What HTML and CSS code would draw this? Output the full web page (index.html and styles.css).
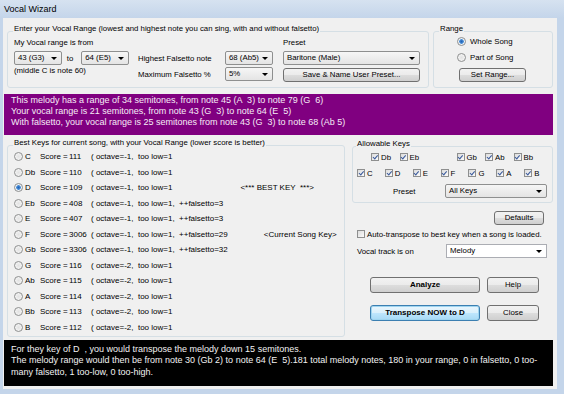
FILE: index.html
```html
<!DOCTYPE html>
<html>
<head>
    <link rel="stylesheet" href="styles.css">
</head>
<body>
    <div class="window">
        <div class="titlebar">Vocal Wizard</div>
        <div class="client">
            <div class="top-row">
                <div class="group vocal">
                    <span class="group-label">Enter your Vocal Range (lowest and highest note you can sing, with and without falsetto)</span>
                    <div class="vocal-body">
                        <div class="col-range">
                            <div class="line">My Vocal range is from</div>
                            <div class="combo-row">
                                <div class="combo w-note">43 (G3)</div>
                                <span class="to">to</span>
                                <div class="combo w-note">64 (E5)</div>
                            </div>
                            <div class="line">(middle C is note 60)</div>
                        </div>
                        <div class="col-falsetto">
                            <div class="field">
                                <span class="field-label">Highest Falsetto note</span>
                                <div class="combo w-small">68 (Ab5)</div>
                            </div>
                            <div class="field">
                                <span class="field-label">Maximum Falsetto %</span>
                                <div class="combo w-small">5%</div>
                            </div>
                        </div>
                        <div class="col-preset">
                            <div class="line">Preset</div>
                            <div class="combo w-preset">Baritone (Male)</div>
                            <button class="btn btn-preset">Save &amp; Name User Preset...</button>
                        </div>
                    </div>
                </div>
                <div class="group range">
                    <span class="group-label">Range</span>
                    <div class="range-body">
                        <div class="radio-row"><span class="radio checked"></span>Whole Song</div>
                        <div class="radio-row"><span class="radio"></span>Part of Song</div>
                        <button class="btn btn-range">Set Range...</button>
                    </div>
                </div>
            </div>

            <div class="info">
                <div class="text-line">This melody has a range of 34 semitones, from note 45 (A  3) to note 79 (G  6)</div>
                <div class="text-line">Your vocal range is 21 semitones, from note 43 (G  3) to note 64 (E  5)</div>
                <div class="text-line">With falsetto, your vocal range is 25 semitones from note 43 (G  3) to note 68 (Ab 5)</div>
            </div>

            <div class="middle-row">
                <div class="group best">
                    <span class="group-label">Best Keys for current song, with your Vocal Range (lower score is better)</span>
                    <div class="key-row"><span class="radio"></span><span class="key">C</span><span class="score-label">Score =</span><span class="score">111</span><span class="detail">( octave=-1,  too low=1</span></div>
                    <div class="key-row"><span class="radio"></span><span class="key">Db</span><span class="score-label">Score =</span><span class="score">110</span><span class="detail">( octave=-1,  too low=1</span></div>
                    <div class="key-row"><span class="radio checked"></span><span class="key">D</span><span class="score-label">Score =</span><span class="score">109</span><span class="detail">( octave=-1,  too low=1</span><span class="note note-best">&lt;*** BEST KEY  ***&gt;</span></div>
                    <div class="key-row"><span class="radio"></span><span class="key">Eb</span><span class="score-label">Score =</span><span class="score">408</span><span class="detail">( octave=-1,  too low=1,  ++falsetto=3</span></div>
                    <div class="key-row"><span class="radio"></span><span class="key">E</span><span class="score-label">Score =</span><span class="score">407</span><span class="detail">( octave=-1,  too low=1,  ++falsetto=3</span></div>
                    <div class="key-row"><span class="radio"></span><span class="key">F</span><span class="score-label">Score =</span><span class="score">3006</span><span class="detail">( octave=-1,  too low=1,  ++falsetto=29</span><span class="note note-current">&lt;Current Song Key&gt;</span></div>
                    <div class="key-row"><span class="radio"></span><span class="key">Gb</span><span class="score-label">Score =</span><span class="score">3306</span><span class="detail">( octave=-1,  too low=1,  ++falsetto=32</span></div>
                    <div class="key-row"><span class="radio"></span><span class="key">G</span><span class="score-label">Score =</span><span class="score">116</span><span class="detail">( octave=-2,  too low=1</span></div>
                    <div class="key-row"><span class="radio"></span><span class="key">Ab</span><span class="score-label">Score =</span><span class="score">115</span><span class="detail">( octave=-2,  too low=1</span></div>
                    <div class="key-row"><span class="radio"></span><span class="key">A</span><span class="score-label">Score =</span><span class="score">114</span><span class="detail">( octave=-2,  too low=1</span></div>
                    <div class="key-row"><span class="radio"></span><span class="key">Bb</span><span class="score-label">Score =</span><span class="score">113</span><span class="detail">( octave=-2,  too low=1</span></div>
                    <div class="key-row"><span class="radio"></span><span class="key">B</span><span class="score-label">Score =</span><span class="score">112</span><span class="detail">( octave=-2,  too low=1</span></div>
                </div>

                <div class="side">
                    <div class="group allowable">
                        <span class="group-label">Allowable Keys</span>
                        <div class="check-row flats">
                            <span class="check-item"><span class="checkbox checked"></span>Db</span>
                            <span class="check-item"><span class="checkbox checked"></span>Eb</span>
                            <span class="check-item"></span>
                            <span class="check-item"><span class="checkbox checked"></span>Gb</span>
                            <span class="check-item"><span class="checkbox checked"></span>Ab</span>
                            <span class="check-item"><span class="checkbox checked"></span>Bb</span>
                        </div>
                        <div class="check-row">
                            <span class="check-item"><span class="checkbox checked"></span>C</span>
                            <span class="check-item"><span class="checkbox checked"></span>D</span>
                            <span class="check-item"><span class="checkbox checked"></span>E</span>
                            <span class="check-item"><span class="checkbox checked"></span>F</span>
                            <span class="check-item"><span class="checkbox checked"></span>G</span>
                            <span class="check-item"><span class="checkbox checked"></span>A</span>
                            <span class="check-item"><span class="checkbox checked"></span>B</span>
                        </div>
                        <div class="preset-row">
                            <span class="preset-label">Preset</span>
                            <div class="combo w-keys">All Keys</div>
                        </div>
                    </div>

                    <button class="btn btn-defaults">Defaults</button>

                    <div class="auto-row"><span class="checkbox"></span>Auto-transpose to best key when a song is loaded.</div>

                    <div class="track-row">
                        <span class="track-label">Vocal track is on</span>
                        <div class="combo combo-white w-track">Melody</div>
                    </div>

                    <div class="action-row">
                        <button class="btn btn-big">Analyze</button>
                        <button class="btn btn-small">Help</button>
                    </div>
                    <div class="action-row second">
                        <button class="btn btn-big btn-default">Transpose NOW to D</button>
                        <button class="btn btn-small">Close</button>
                    </div>
                </div>
            </div>

            <div class="result">
                <div class="text-line">For they key of D  , you would transpose the melody down 15 semitones.</div>
                <div class="text-line">The melody range would then be from note 30 (Gb 2) to note 64 (E  5).181 total melody notes, 180 in your range, 0 in falsetto, 0 too-</div>
                <div class="text-line">many falsetto, 1 too-low, 0 too-high.</div>
            </div>
        </div>
    </div>
</body>
</html>
```

FILE: styles.css
```css
body {
    margin: 0;
    font-family: "Liberation Sans", Arial, sans-serif;
    font-size: 7.8px;
    color: #000;
}

.window {
    width: 564px;
    height: 394px;
    box-sizing: border-box;
    background-color: #c4d5ea;
    padding: 0 7px 5px 3px;
    overflow: hidden;
}

.titlebar {
    height: 18px;
    line-height: 18px;
    margin: 0 -7px 0 -3px;
    padding-left: 4px;
    font-size: 9px;
    background: linear-gradient(#d6e2f0, #c4d5ea);
}

.client {
    height: 371px;
    background-color: #f0f0f0;
    display: flex;
    flex-direction: column;
}

/* group boxes */
.group {
    border: 1px solid #d5dfe5;
    border-radius: 3px;
    box-sizing: border-box;
}

.group-label {
    display: block;
    width: fit-content;
    margin: -9px 0 0 5px;
    padding: 0 1px;
    line-height: 12px;
    background-color: #f0f0f0;
}

.line {
    line-height: 12px;
}

.text-line {
    white-space: pre;
}

/* combos and buttons */
.combo {
    height: 14px;
    box-sizing: border-box;
    border: 1px solid #8e8f8f;
    border-radius: 2px;
    background: linear-gradient(#f6f6f6, #e4e4e4);
    line-height: 12px;
    padding-left: 3px;
    display: flex;
    justify-content: space-between;
    align-items: center;
    white-space: nowrap;
}

.combo::after {
    content: "";
    border-top: 3px solid #000;
    border-left: 3px solid transparent;
    border-right: 3px solid transparent;
    margin-right: 4px;
}

.combo-white {
    background: #fff;
    border-color: #abadb3;
    border-radius: 0;
}

.btn {
    height: 14px;
    box-sizing: border-box;
    border: 1px solid #707070;
    border-radius: 3px;
    background: linear-gradient(#f2f2f2 0%, #ebebeb 50%, #dddddd 51%, #cfcfcf 100%);
    font: inherit;
    color: #000;
    padding: 0;
    line-height: 12px;
    text-align: center;
    white-space: nowrap;
}

.btn-default {
    border-color: #3c7fb1;
    background: linear-gradient(#eaf6fd 0%, #d9f0fc 50%, #bee6fd 51%, #a7d9f5 100%);
    box-shadow: inset 0 0 0 1px #9fd5f0;
}

.radio {
    width: 9px;
    height: 9px;
    box-sizing: border-box;
    border: 1px solid #8e8f8f;
    border-radius: 50%;
    background: radial-gradient(circle, #e2e2e2, #fafafa);
    flex: none;
}

.radio.checked {
    background: radial-gradient(circle, #1f5fb5 0, #4b8fd6 2px, #eef2f6 2.6px);
}

.checkbox {
    width: 8px;
    height: 8px;
    box-sizing: border-box;
    border: 1px solid #8e8f8f;
    background: linear-gradient(135deg, #dcdcdc, #fbfbfb);
    margin-right: 2px;
    flex: none;
    display: flex;
    justify-content: center;
    align-items: center;
}

.checkbox.checked::after {
    content: "";
    width: 1.6px;
    height: 3.6px;
    border: solid #3a5a9c;
    border-width: 0 1.3px 1.3px 0;
    transform: rotate(40deg);
    margin-top: -1px;
}

/* top row */
.top-row {
    display: flex;
    margin-top: 13px;
}

.vocal {
    margin-left: 4px;
    width: 422px;
    height: 57px;
}

.vocal-body {
    display: flex;
    padding: 2px 0 0 6px;
}

.col-range {
    width: 115px;
    margin-right: 9px;
}

.combo-row {
    display: flex;
    align-items: center;
    margin-top: 2px;
}

.to {
    margin: 0 8px 0 5px;
}

.w-note {
    width: 48px;
}

.col-falsetto {
    width: 135px;
    padding-top: 14px;
}

.field {
    display: flex;
    align-items: center;
    height: 14px;
}

.field + .field {
    margin-top: 2px;
}

.field-label {
    width: 87px;
}

.w-small {
    width: 48px;
}

.col-preset {
    width: 137px;
    margin-left: 10px;
}

.w-preset {
    width: 137px;
    margin-top: 2px;
}

.btn-preset {
    width: 137px;
    margin-top: 3px;
}

.range {
    margin-left: 4px;
    width: 120px;
    height: 57px;
}

.range-body {
    padding-left: 23px;
}

.radio-row {
    display: flex;
    align-items: center;
    height: 12px;
}

.radio-row .radio {
    margin-right: 4px;
}

.radio-row + .radio-row {
    margin-top: 4px;
}

.btn-range {
    width: 67px;
    margin: 5px 0 0 2px;
}

/* melody info band */
.info {
    margin: 6px 0 0 1px;
    width: 549px;
    height: 41px;
    box-sizing: border-box;
    padding: 1px 0 0 7px;
    background-color: #800080;
    color: #f6ecf6;
    font-size: 9px;
    line-height: 11px;
}

/* middle */
.middle-row {
    display: flex;
    align-items: flex-start;
    margin-top: 10px;
}

.best {
    margin-left: 4px;
    width: 338px;
    height: 192px;
    padding-left: 6px;
}

.best .group-label {
    margin-left: -1px;
}

.key-row {
    display: flex;
    align-items: center;
    height: 15.5px;
    font-size: 8px;
}

.key-row .radio {
    margin-right: 2px;
}

.key {
    width: 15px;
}

.score-label {
    width: 29px;
    white-space: pre;
}

.score {
    width: 22px;
}

.detail,
.note {
    white-space: pre;
}

.note-best {
    margin-left: 68px;
}

.note-current {
    margin-left: 36px;
}

.side {
    margin: 1px 0 0 7px;
    width: 201px;
}

.allowable {
    height: 57px;
}

.allowable .group-label {
    margin-left: 3px;
}

.check-row {
    display: flex;
    align-items: center;
    height: 16px;
    padding-left: 4px;
}

.check-row.flats {
    margin-top: -1px;
    padding-left: 18px;
}

.check-item {
    width: 28.5px;
    display: flex;
    align-items: center;
}

.preset-row {
    display: flex;
    align-items: center;
    margin-top: 3px;
    padding-left: 40px;
}

.preset-label {
    width: 52px;
}

.w-keys {
    width: 102px;
}

.btn-defaults {
    display: block;
    width: 50px;
    margin: 8px 0 0 142px;
}

.auto-row {
    display: flex;
    align-items: center;
    height: 12px;
    margin-top: 3px;
    padding-left: 5px;
}

.track-row {
    display: flex;
    align-items: center;
    margin-top: 4px;
    padding-left: 5px;
}

.track-label {
    width: 89px;
}

.w-track {
    width: 101px;
}

.action-row {
    display: flex;
    gap: 7px;
    margin-top: 19px;
    padding-left: 18px;
}

.action-row.second {
    margin-top: 12px;
}

.btn-big {
    width: 110px;
    height: 16px;
    font-weight: bold;
    font-size: 8px;
}

.btn-small {
    width: 52px;
    height: 16px;
}

/* transpose result */
.result {
    margin: 3px 0 0 1px;
    width: 549px;
    height: 46px;
    box-sizing: border-box;
    padding: 3.5px 0 0 7px;
    background-color: #000;
    color: #f2f2f2;
    font-size: 9px;
    line-height: 11.5px;
}
```
